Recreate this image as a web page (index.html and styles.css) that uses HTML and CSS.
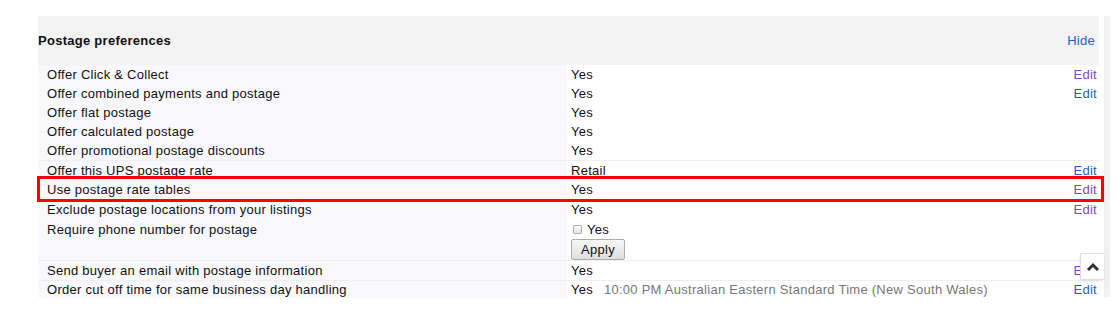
FILE: index.html
```html
<!DOCTYPE html>
<html lang="en">
<head>
	<meta charset="UTF-8"/>
	<meta name="viewport" content="width=device-width, initial-scale=1.0">
	<title>Postage preferences</title>
	<link rel="stylesheet" href="styles.css">
</head>
<body>
	<div class="page">
		<div class="panel">
			<!-- Section header -->
			<div class="panel-head">
				<h2>Postage preferences</h2>
				<a class="link" href="#">Hide</a>
			</div>
			<div class="row r19">
				<div class="label">Offer Click &amp; Collect</div>
				<div class="value">Yes</div>
				<div class="action"><a class="link visited" href="#">Edit</a></div>
			</div>
			<div class="row r19">
				<div class="label">Offer combined payments and postage</div>
				<div class="value">Yes</div>
				<div class="action"><a class="link" href="#">Edit</a></div>
			</div>
			<div class="row r19">
				<div class="label">Offer flat postage</div>
				<div class="value">Yes</div>
				<div class="action"></div>
			</div>
			<div class="row r19">
				<div class="label">Offer calculated postage</div>
				<div class="value">Yes</div>
				<div class="action"></div>
			</div>
			<div class="row r19">
				<div class="label">Offer promotional postage discounts</div>
				<div class="value">Yes</div>
				<div class="action"></div>
			</div>
			<div class="row r19 sep">
				<div class="label">Offer this UPS postage rate</div>
				<div class="value">Retail</div>
				<div class="action"><a class="link" href="#">Edit</a></div>
			</div>
			<div class="row r20 marked">
				<div class="label">Use postage rate tables</div>
				<div class="value">Yes</div>
				<div class="action"><a class="link visited" href="#">Edit</a></div>
			</div>
			<div class="row r20">
				<div class="label">Exclude postage locations from your listings</div>
				<div class="value">Yes</div>
				<div class="action"><a class="link visited" href="#">Edit</a></div>
			</div>
			<div class="row">
				<div class="label">Require phone number for postage</div>
				<div class="value form">
					<label class="check"><span class="box"></span>Yes</label>
					<button class="btn" type="button">Apply</button>
				</div>
				<div class="action"></div>
			</div>
			<div class="row r19 sep">
				<div class="label">Send buyer an email with postage information</div>
				<div class="value">Yes</div>
				<div class="action"><a class="link visited" href="#">Edit</a></div>
			</div>
			<div class="row r17 sep">
				<div class="label">Order cut off time for same business day handling</div>
				<div class="value">Yes <span class="note">10:00 PM Australian Eastern Standard Time (New South Wales)</span></div>
				<div class="action"><a class="link" href="#">Edit</a></div>
			</div>
		</div>
		<div class="strip"></div>
	</div>
	<!-- Back to top button -->
	<a class="to-top" href="#">
		<svg width="14" height="10" viewBox="0 0 14 10"><path d="M2 8 L7 3 L12 8" fill="none" stroke="#333" stroke-width="3"/></svg>
	</a>
</body>
</html>
```

FILE: styles.css
```css
	/* Base page */
	body {
		margin: 0;
		font-family: "Liberation Sans", Arial, sans-serif;
		font-size: 13px;
		letter-spacing: 0.27px;
		color: #111;
		background: #fff;
	}
	.page {
		display: flex;
		gap: 5px;
		padding: 16px 0 0 38px;
	}
	.panel {
		width: 1061px;
	}
	/* Right grey strip */
	.strip {
		width: 6px;
		height: 281px;
		background-color: #f1f1f1;
	}
	/* Header row */
	.panel-head {
		display: flex;
		align-items: center;
		justify-content: space-between;
		height: 49px;
		background-color: #f3f3f3;
	}
	.panel-head h2 {
		margin: 0;
		font-size: 13px;
		font-weight: bold;
		color: #111;
	}
	.panel-head .link {
		padding-right: 4px;
	}
	/* Links */
	.link {
		color: #1d5fc9;
		text-decoration: none;
	}
	.link.visited {
		color: #8046bf;
	}
	/* Preference rows */
	.row {
		display: grid;
		grid-template-columns: 529px 1fr auto;
		line-height: 19px;
	}
	.row.r19 { height: 19px; }
	.row.r20 { height: 20px; line-height: 20px; }
	.row.r17 { height: 17px; line-height: 17px; }
	.row.sep {
		border-top: 1px solid #efeff3;
	}
	.label {
		background-color: #f8f8fd;
		padding-left: 9px;
	}
	.value {
		padding-left: 4px;
	}
	.action {
		padding-right: 2px;
		text-align: right;
	}
	.note {
		color: #777;
		margin-left: 7px;
	}
	/* Highlighted row (red annotation frame) */
	.row.marked {
		position: relative;
	}
	.row.marked::after {
		content: "";
		position: absolute;
		left: -1px;
		right: -5px;
		top: -4px;
		bottom: -2px;
		border: 3px solid #f00;
	}
	/* Checkbox + apply button cell */
	.value.form {
		display: flex;
		flex-direction: column;
		align-items: flex-start;
		height: 40px;
	}
	.check {
		display: flex;
		align-items: center;
		height: 19px;
		padding-left: 2px;
	}
	.box {
		width: 7px;
		height: 7px;
		margin-right: 5px;
		border: 1px solid #b0b0b0;
		background: linear-gradient(#fafafa, #e3e3e3);
		border-radius: 1px;
	}
	.btn {
		width: 54px;
		height: 21px;
		padding: 0;
		font-family: "Liberation Sans", Arial, sans-serif;
		font-size: 13px;
		letter-spacing: 0.27px;
		color: #111;
		border: 1px solid #acacac;
		border-radius: 2px;
		background: linear-gradient(#f7f7f7, #dedede);
	}
	/* Floating back-to-top */
	.to-top {
		position: absolute;
		left: 1080px;
		top: 253px;
		width: 23px;
		height: 25px;
		display: flex;
		align-items: center;
		justify-content: center;
		background: #fff;
		border: 1px solid #ddd;
		border-right: none;
		border-radius: 2px 0 0 2px;
		box-shadow: 0 1px 3px rgba(0, 0, 0, 0.1);
	}
```
